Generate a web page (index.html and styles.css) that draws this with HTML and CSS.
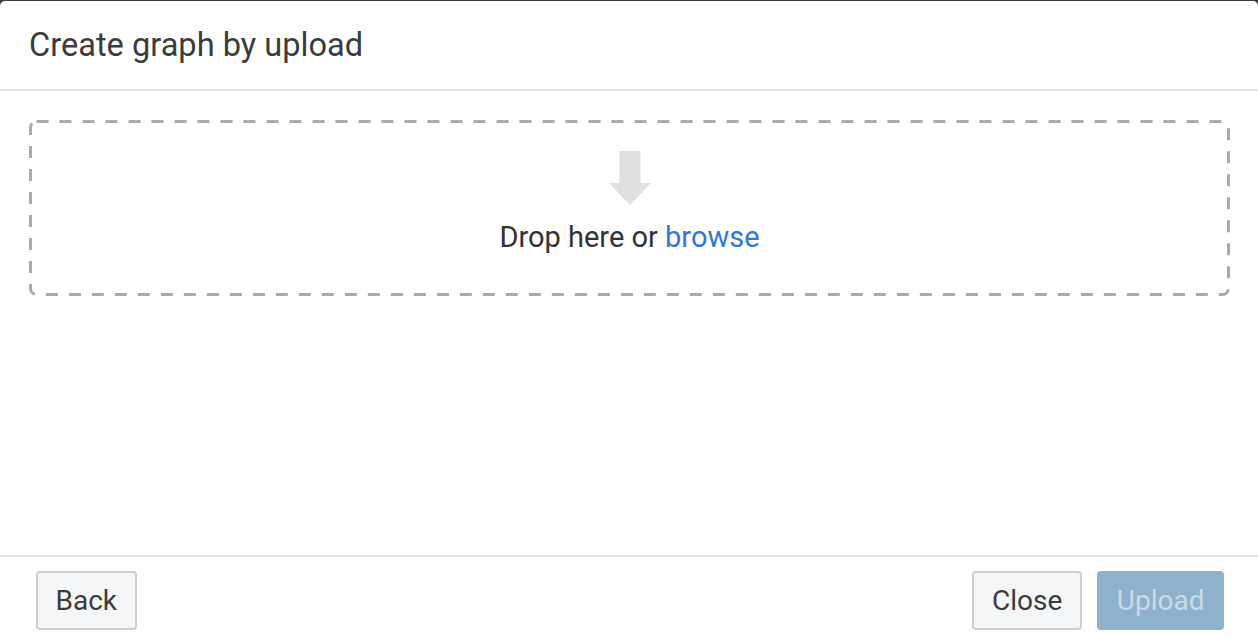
FILE: index.html
```html
<!DOCTYPE html>
<html>
<head>
<meta charset="utf-8">
<link rel="stylesheet" href="styles.css">
</head>
<body>
<div class="modal">
  <div class="modal-header">
    <h4 class="modal-title">Create graph by upload</h4>
  </div>
  <div class="modal-body">
    <div class="dropzone">
      <svg class="drop-icon" width="42" height="54" viewBox="0 0 42 54">
        <path d="M10.5 0 H31.5 V32 H42 L21 54 L0 32 H10.5 Z" fill="#e0e0e0"/>
      </svg>
      <div class="drop-text">Drop here or <a class="browse" href="#">browse</a></div>
    </div>
  </div>
  <div class="modal-footer">
    <button class="btn btn-default btn-back">Back</button>
    <div class="footer-right">
      <button class="btn btn-default">Close</button>
      <button class="btn btn-primary" disabled>Upload</button>
    </div>
  </div>
</div>
</body>
</html>
```

FILE: styles.css
```css
html, body {
  margin: 0;
  padding: 0;
  height: 100%;
}
body {
  background: #3a3a3a;
  font-family: Roboto, "Liberation Sans", Arial, sans-serif;
  color: #333;
}
.modal {
  margin-top: 1px;
  height: 643px;
  background: #fff;
  border-radius: 5px 5px 0 0;
  display: flex;
  flex-direction: column;
}
.modal-header {
  height: 88px;
  border-bottom: 2px solid #e2e2e2;
  display: flex;
  align-items: center;
  padding: 0 29px;
  box-sizing: content-box;
}
.modal-title {
  margin: 0;
  font-weight: 400;
  font-size: 32.6px;
  color: #3c3c3c;
}
.modal-body {
  flex: 1;
  padding: 29px 28px 0 29px;
}
.dropzone {
  height: 176px;
  background-image: url("data:image/svg+xml,%3Csvg xmlns='http://www.w3.org/2000/svg' width='100%25' height='100%25'%3E%3Crect x='1.5' y='1.5' width='calc(100%25 - 3px)' height='calc(100%25 - 3px)' rx='6' ry='6' fill='none' stroke='%23aaaaaa' stroke-width='3' stroke-dasharray='12 11'/%3E%3C/svg%3E");
  border-radius: 7px;
  display: flex;
  flex-direction: column;
  align-items: center;
  padding-top: 31px;
  box-sizing: border-box;
}
.drop-icon {
  display: block;
}
.drop-text {
  margin-top: 15px;
  font-size: 29px;
  line-height: 34px;
  color: #333;
}
.browse {
  color: #3179d0;
  text-decoration: none;
}
.modal-footer {
  height: 87px;
  border-top: 2px solid #e2e2e2;
  display: flex;
  align-items: center;
  justify-content: space-between;
  padding: 0 34px 0 36px;
}
.footer-right {
  display: flex;
  gap: 15px;
}
.btn {
  height: 59px;
  padding: 0 18px;
  font-family: Roboto, "Liberation Sans", Arial, sans-serif;
  font-size: 28px;
  border-radius: 4px;
  border: 2px solid #cfcfcf;
  background: #f5f6f8;
  color: #3c3c3c;
}
.btn-back {
  padding: 0 17.5px;
}
.btn-primary {
  background: #8eb1cc;
  border-color: #8eb1cc;
  color: #c9dbe8;
  padding: 0 17.5px;
}
```
